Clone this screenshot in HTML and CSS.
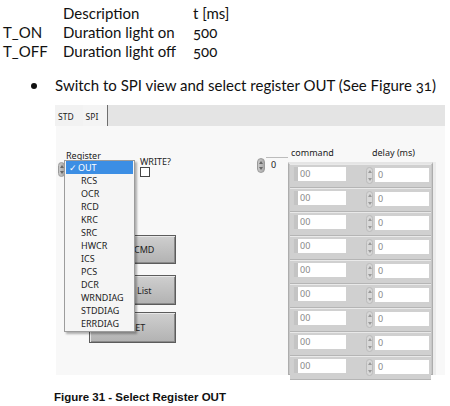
FILE: index.html
```html
<!DOCTYPE html>
<html>
<head>
<meta charset="utf-8">
<link rel="stylesheet" href="styles.css">
</head>
<body>
<div class="params">
  <span></span><span>Description</span><span>t [ms]</span>
  <span>T_ON</span><span>Duration light on</span><span>500</span>
  <span>T_OFF</span><span>Duration light off</span><span>500</span>
</div>
<ul class="steps">
  <li>Switch to SPI view and select register OUT (See Figure 31)</li>
</ul>
<div class="shot">
  <div class="tabs">
    <span class="tab">STD</span>
    <span class="tab active">SPI</span>
  </div>
  <div class="panel">
    <div class="lbl reg-lbl">Register</div>
    <div class="spin reg-spin"><span class="up"></span><span class="dn"></span></div>
    <div class="lbl write-lbl">WRITE?</div>
    <div class="check"></div>

    <div class="btn b1">Send CMD</div>
    <div class="btn b2">Send List</div>
    <div class="btn b3">RESET</div>

    <div class="spin idx-spin"><span class="up"></span><span class="dn"></span></div>
    <div class="idx">0</div>
    <div class="lbl h-cmd">command</div>
    <div class="lbl h-delay">delay (ms)</div>

    <div class="array">
      <div class="row"><div class="cmd"><i></i>00</div><div class="spin rs"><span class="up"></span><span class="dn"></span></div><div class="dly">0</div></div>
      <div class="row"><div class="cmd"><i></i>00</div><div class="spin rs"><span class="up"></span><span class="dn"></span></div><div class="dly">0</div></div>
      <div class="row"><div class="cmd"><i></i>00</div><div class="spin rs"><span class="up"></span><span class="dn"></span></div><div class="dly">0</div></div>
      <div class="row"><div class="cmd"><i></i>00</div><div class="spin rs"><span class="up"></span><span class="dn"></span></div><div class="dly">0</div></div>
      <div class="row"><div class="cmd"><i></i>00</div><div class="spin rs"><span class="up"></span><span class="dn"></span></div><div class="dly">0</div></div>
      <div class="row"><div class="cmd"><i></i>00</div><div class="spin rs"><span class="up"></span><span class="dn"></span></div><div class="dly">0</div></div>
      <div class="row"><div class="cmd"><i></i>00</div><div class="spin rs"><span class="up"></span><span class="dn"></span></div><div class="dly">0</div></div>
      <div class="row"><div class="cmd"><i></i>00</div><div class="spin rs"><span class="up"></span><span class="dn"></span></div><div class="dly">0</div></div>
      <div class="row"><div class="cmd"><i></i>00</div><div class="spin rs"><span class="up"></span><span class="dn"></span></div><div class="dly">0</div></div>
    </div>

    <div class="menu">
      <div class="item sel"><span class="tick">✓</span>OUT</div>
      <div class="item">RCS</div>
      <div class="item">OCR</div>
      <div class="item">RCD</div>
      <div class="item">KRC</div>
      <div class="item">SRC</div>
      <div class="item">HWCR</div>
      <div class="item">ICS</div>
      <div class="item">PCS</div>
      <div class="item">DCR</div>
      <div class="item">WRNDIAG</div>
      <div class="item">STDDIAG</div>
      <div class="item">ERRDIAG</div>
    </div>
  </div>
</div>
<p class="caption">Figure 31 - Select Register OUT</p>
</body>
</html>
```
FILE: styles.css
```css
* { box-sizing: border-box; }
body {
  margin: 0;
  width: 450px;
  height: 406px;
  overflow: hidden;
  background: #fff;
  font-family: Lato, "Open Sans", sans-serif;
  color: #111;
}
.params {
  display: grid;
  grid-template-columns: 60px 130px auto;
  padding: 4px 0 0 3px;
  font-size: 15px;
  line-height: 19px;
  font-variant-numeric: oldstyle-nums;
}
.steps {
  margin: 15px 0 0 0;
  padding: 0 0 0 55px;
  font-size: 15px;
  line-height: 19px;
  list-style: none;
  font-variant-numeric: oldstyle-nums;
}
.steps li { position: relative; }
.steps li::before {
  content: "";
  position: absolute;
  left: -24px;
  top: 7px;
  width: 6px;
  height: 6px;
  border-radius: 50%;
  background: #111;
}
.shot {
  margin: 10px 0 0 55px;
  width: 390px;
  height: 270px;
  font-family: "Noto Sans", "Open Sans", sans-serif;
  color: #222;
}
.tabs {
  height: 21px;
  background: #e4e4e4;
  display: flex;
  align-items: stretch;
  font-size: 8.5px;
}
.tab {
  padding: 6px 3px 0 3px;
  background: #f2f2f2;
}
.tab:first-child { padding-left: 3px; padding-right: 9px; }
.tab.active {
  padding-right: 9px;
  border-right: 1px solid #6e6e6e;
  background: #f4f4f4;
}
.panel {
  position: relative;
  height: 249px;
  background: #f8f8f8;
  margin-left: 1px;
}
.lbl { position: absolute; font-size: 9px; line-height: 10px; color: #222; }
.reg-lbl { left: 10px; top: 25px; }
.write-lbl { left: 84px; top: 31px; }
.check {
  position: absolute;
  left: 84px; top: 41px;
  width: 10px; height: 10px;
  border: 1px solid #444;
  background: #fff;
}
.spin {
  position: absolute;
  width: 7px;
  border-radius: 4px;
  background: linear-gradient(90deg, #c9c9c9, #a9a9a9);
  border: 1px solid #9a9a9a;
  display: flex;
  flex-direction: column;
  align-items: center;
  justify-content: space-around;
}
.spin .up, .spin .dn {
  width: 0; height: 0;
  border-left: 2px solid transparent;
  border-right: 2px solid transparent;
}
.spin .up { border-bottom: 3px solid #666; }
.spin .dn { border-top: 3px solid #666; }
.reg-spin { left: 2px; top: 36px; height: 15px; }
.idx-spin { left: 201px; top: 32px; height: 15px; width: 8px; }
.idx {
  position: absolute;
  left: 210px; top: 31px;
  width: 22px; height: 15px;
  border-top: 1px solid #bcbcbc;
  font-size: 9px;
  line-height: 14px;
  padding-left: 5px;
}
.h-cmd { left: 235px; top: 22px; }
.h-delay { left: 316px; top: 22px; }
.btn {
  position: absolute;
  left: 33px;
  width: 87px;
  font-size: 9px;
  text-align: center;
  background: linear-gradient(180deg, #cfcfcf, #b2b2b2);
  border: 1px solid #5c5c5c;
  box-shadow: inset 1px 1px 0 #e8e8e8, inset -1px -1px 0 #8a8a8a;
  display: flex;
  align-items: center;
  justify-content: center;
}
.b1 { top: 109px; height: 29px; }
.b2 { top: 149px; height: 30px; }
.b3 { top: 186px; height: 31px; }
.array {
  position: absolute;
  left: 232px; top: 36px;
  width: 145px; height: 213px;
  background: #c6c6c6;
  border: 1px solid #adadad;
  border-top: 2px solid #e5e5e5;
  box-shadow: 3px 0 0 #ececec;
  padding: 0 1px;
}
.row {
  height: 24px;
  background: #d0d0d0;
  border-top: 1px solid #e9e9e9;
  border-bottom: 1px solid #b5b5b5;
  position: relative;
}
.cmd {
  position: absolute;
  left: 3px; top: 2px;
  width: 53px; height: 14px;
  background: #fff;
  font-size: 9px;
  line-height: 14px;
  color: #888;
  padding-left: 6px;
  border-left: 1px solid #cfcfcf;
}
.cmd i {
  position: absolute;
  left: 0; top: 0;
  width: 4px; height: 100%;
  background: #c4c4c4;
}
.rs { left: 76px; top: 2px; height: 17px; width: 7px; background: #d8d8d8; border-color: #bbb; }
.rs .up { border-bottom-color: #999; }
.rs .dn { border-top-color: #999; }
.dly {
  position: absolute;
  left: 85px; top: 3px;
  width: 54px; height: 14px;
  background: #fff;
  font-size: 9px;
  line-height: 14px;
  color: #888;
  padding-left: 3px;
}
.menu {
  position: absolute;
  left: 8px; top: 34px;
  width: 71px; height: 172px;
  background: #f5f5f5;
  border: 1px solid #9c9c9c;
  box-shadow: 2px 2px 2px rgba(0,0,0,0.3);
  padding: 0 1px;
  font-size: 9px;
}
.item {
  height: 13px;
  line-height: 13px;
  padding-left: 15px;
  color: #222;
}
.item.sel {
  background: #3c8ee4;
  color: #fff;
  padding-left: 3px;
}
.tick { display: inline-block; width: 9px; }
.caption {
  margin: 16px 0 0 54px;
  font-family: "Liberation Sans", Arial, sans-serif;
  font-weight: bold;
  font-size: 11.5px;
  line-height: 13px;
  color: #111;
}
```
